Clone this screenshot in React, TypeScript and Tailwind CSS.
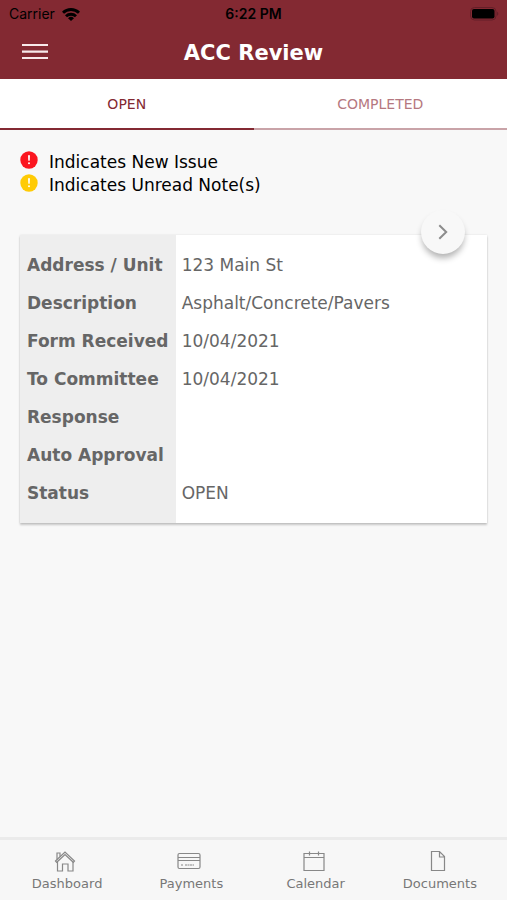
import { useState, type ReactNode } from "react";

const rows = [
    { label: "Address / Unit", value: "123 Main St" },
    { label: "Description", value: "Asphalt/Concrete/Pavers" },
    { label: "Form Received", value: "10/04/2021" },
    { label: "To Committee", value: "10/04/2021" },
    { label: "Response", value: "" },
    { label: "Auto Approval", value: "" },
    { label: "Status", value: "OPEN" },
];

function StatusBar() {
    return (
        <div className="relative flex h-7 items-center justify-between pl-[9px] pr-2 font-['Inter','Liberation_Sans',sans-serif] text-sm text-black">
            <div className="flex items-center gap-[7px]">
                <span>Carrier</span>
                <svg width="18" height="13" viewBox="0 0 18 13" fill="none" stroke="currentColor" strokeWidth="2.9" aria-hidden="true">
                    <path d="M1 4.800a11.400 11.400 0 0 1 16 0" />
                    <path d="M4 8.300a7.200 7.200 0 0 1 10 0" />
                    <path d="M9 13 6 10.300a4.300 4.300 0 0 1 6 0z" fill="currentColor" stroke="none" />
                </svg>
            </div>
            <span className="absolute left-1/2 -translate-x-1/2 font-semibold">6:22 PM</span>
            <svg width="29" height="14" viewBox="0 0 29 14" aria-hidden="true">
                <rect x="0.5" y="0.5" width="25.5" height="12.5" rx="4" fill="none" stroke="#641f28" />
                <rect x="2" y="2" width="22.5" height="9.5" rx="2" fill="#000" />
                <path d="M27 4.8c1.8.6 1.8 3.4 0 4z" fill="#641f28" />
            </svg>
        </div>
    );
}

function AlertIcon({ className }: { className: string }) {
    return (
        <svg width="18" height="18" viewBox="0 0 18 18" className={className} aria-hidden="true">
            <circle cx="9" cy="9" r="8.7" fill="currentColor" />
            <path d="M8 4.2h2l-.3 5.6H8.3z" fill="#fff" />
            <circle cx="9" cy="12.2" r="1" fill="#fff" />
        </svg>
    );
}

function NavItem({ label, children }: { label: string; children: ReactNode }) {
    return (
        <a href="#" className="flex flex-1 flex-col items-center gap-[2px] text-[13px] leading-5 text-[#777]">
            <svg width="24" height="22" viewBox="0 0 24 22" fill="none" stroke="#888" strokeWidth="1.2" className="mr-1" aria-hidden="true">
                {children}
            </svg>
            {label}
        </a>
    );
}

export default function App() {
    const [tab, setTab] = useState("open");
    const active = "border-[#832932] text-[#832932]";
    const inactive = "border-[#c9a3a8] text-[#b57880]";

    return (
        <div className="flex min-h-screen flex-col bg-[#f8f8f8] font-['DejaVu_Sans',sans-serif]">
            <header className="bg-[#832932] pb-[7px]">
                <StatusBar />
                <div className="relative flex h-11 items-center justify-center pt-[6px]">
                    <button aria-label="Menu" className="absolute left-[22px] top-[15px]">
                        <svg width="26" height="17" viewBox="0 0 26 17" stroke="#f8e9ea" strokeWidth="2.2" aria-hidden="true">
                            <path d="M0 2h26M0 8.600h26M0 15h26" />
                        </svg>
                    </button>
                    <h1 className="text-[21px] leading-7 font-bold text-white">ACC Review</h1>
                </div>
            </header>

            {/* Tabs */}
            <div role="tablist" className="flex bg-white">
                <button
                    role="tab"
                    aria-selected={tab === "open"}
                    onClick={() => setTab("open")}
                    className={`h-[51px] flex-1 border-b-2 text-sm ${tab === "open" ? active : inactive}`}
                >
                    OPEN
                </button>
                <button
                    role="tab"
                    aria-selected={tab === "completed"}
                    onClick={() => setTab("completed")}
                    className={`h-[51px] flex-1 border-b-2 text-sm ${tab === "completed" ? active : inactive}`}
                >
                    COMPLETED
                </button>
            </div>

            <main className="flex-1 px-5 pt-[21px]">
                {/* Legend */}
                <ul className="text-[17px] leading-[23px] text-black">
                    <li className="flex items-start gap-[11px]">
                        <AlertIcon className="text-[#fb1620]" />
                        Indicates New Issue
                    </li>
                    <li className="flex items-start gap-[11px]">
                        <AlertIcon className="text-[#ffcb05]" />
                        Indicates Unread Note(s)
                    </li>
                </ul>

                {/* Issue card */}
                <div className="relative mt-[38px] bg-white shadow-[0_2px_2px_rgba(0,0,0,0.2),0_0_2px_rgba(0,0,0,0.1)]">
                    <table className="w-full border-collapse text-left text-[17px] leading-[38px] text-[#666]">
                        <tbody>
                            {rows.map((row) => (
                                <tr key={row.label} className="group">
                                    <th scope="row" className="w-1/3 bg-[#eee] pl-[7px] font-bold whitespace-nowrap group-first:pt-[11px] group-last:pb-[11px]">
                                        {row.label}
                                    </th>
                                    <td className="pl-[6px] group-first:pt-[11px] group-last:pb-[11px]">{row.value}</td>
                                </tr>
                            ))}
                        </tbody>
                    </table>
                    <button
                        aria-label="Open issue"
                        className="absolute right-[22px] -top-[25px] flex size-11 items-center justify-center rounded-full bg-[#f8f8f8] shadow-[0_5px_6px_-1px_rgba(0,0,0,0.3)]"
                    >
                        <svg width="10" height="16" viewBox="0 0 10 16" fill="none" stroke="#8c8c8c" strokeWidth="2" aria-hidden="true">
                            <path d="M1.300 1.300 8.200 8l-6.900 6.700" />
                        </svg>
                    </button>
                </div>
            </main>

            <nav className="flex border-t-[3px] border-[#ebebeb] bg-[#f7f7f7] px-[5px] pt-[10px] pb-[6px]">
                <NavItem label="Dashboard">
                    <path d="M2.500 11 12 2l9.500 9-1.200 1.300L12 4.600l-8.300 7.700z" />
                    <path d="M4.500 12v9h5v-7h5.500v7h5v-9" />
                    <path d="M4 9.500V3h3v3.500" />
                </NavItem>
                <NavItem label="Payments">
                    <rect x="1" y="3.500" width="22" height="15" rx="1.500" />
                    <path d="M1 7.500h22M1 10.500h22" />
                    <path d="M4 15h2M8 15h9" strokeDasharray="2 .5" />
                </NavItem>
                <NavItem label="Calendar">
                    <path d="M2 3.500h20v17H2zM2 7.500h20M7.500 1.500v4M16.500 1.500v4" />
                </NavItem>
                <NavItem label="Documents">
                    <path d="M5.500 1.500h8l5 5v14h-13zM13.500 1.500v5.500h5" />
                </NavItem>
            </nav>
        </div>
    );
}
